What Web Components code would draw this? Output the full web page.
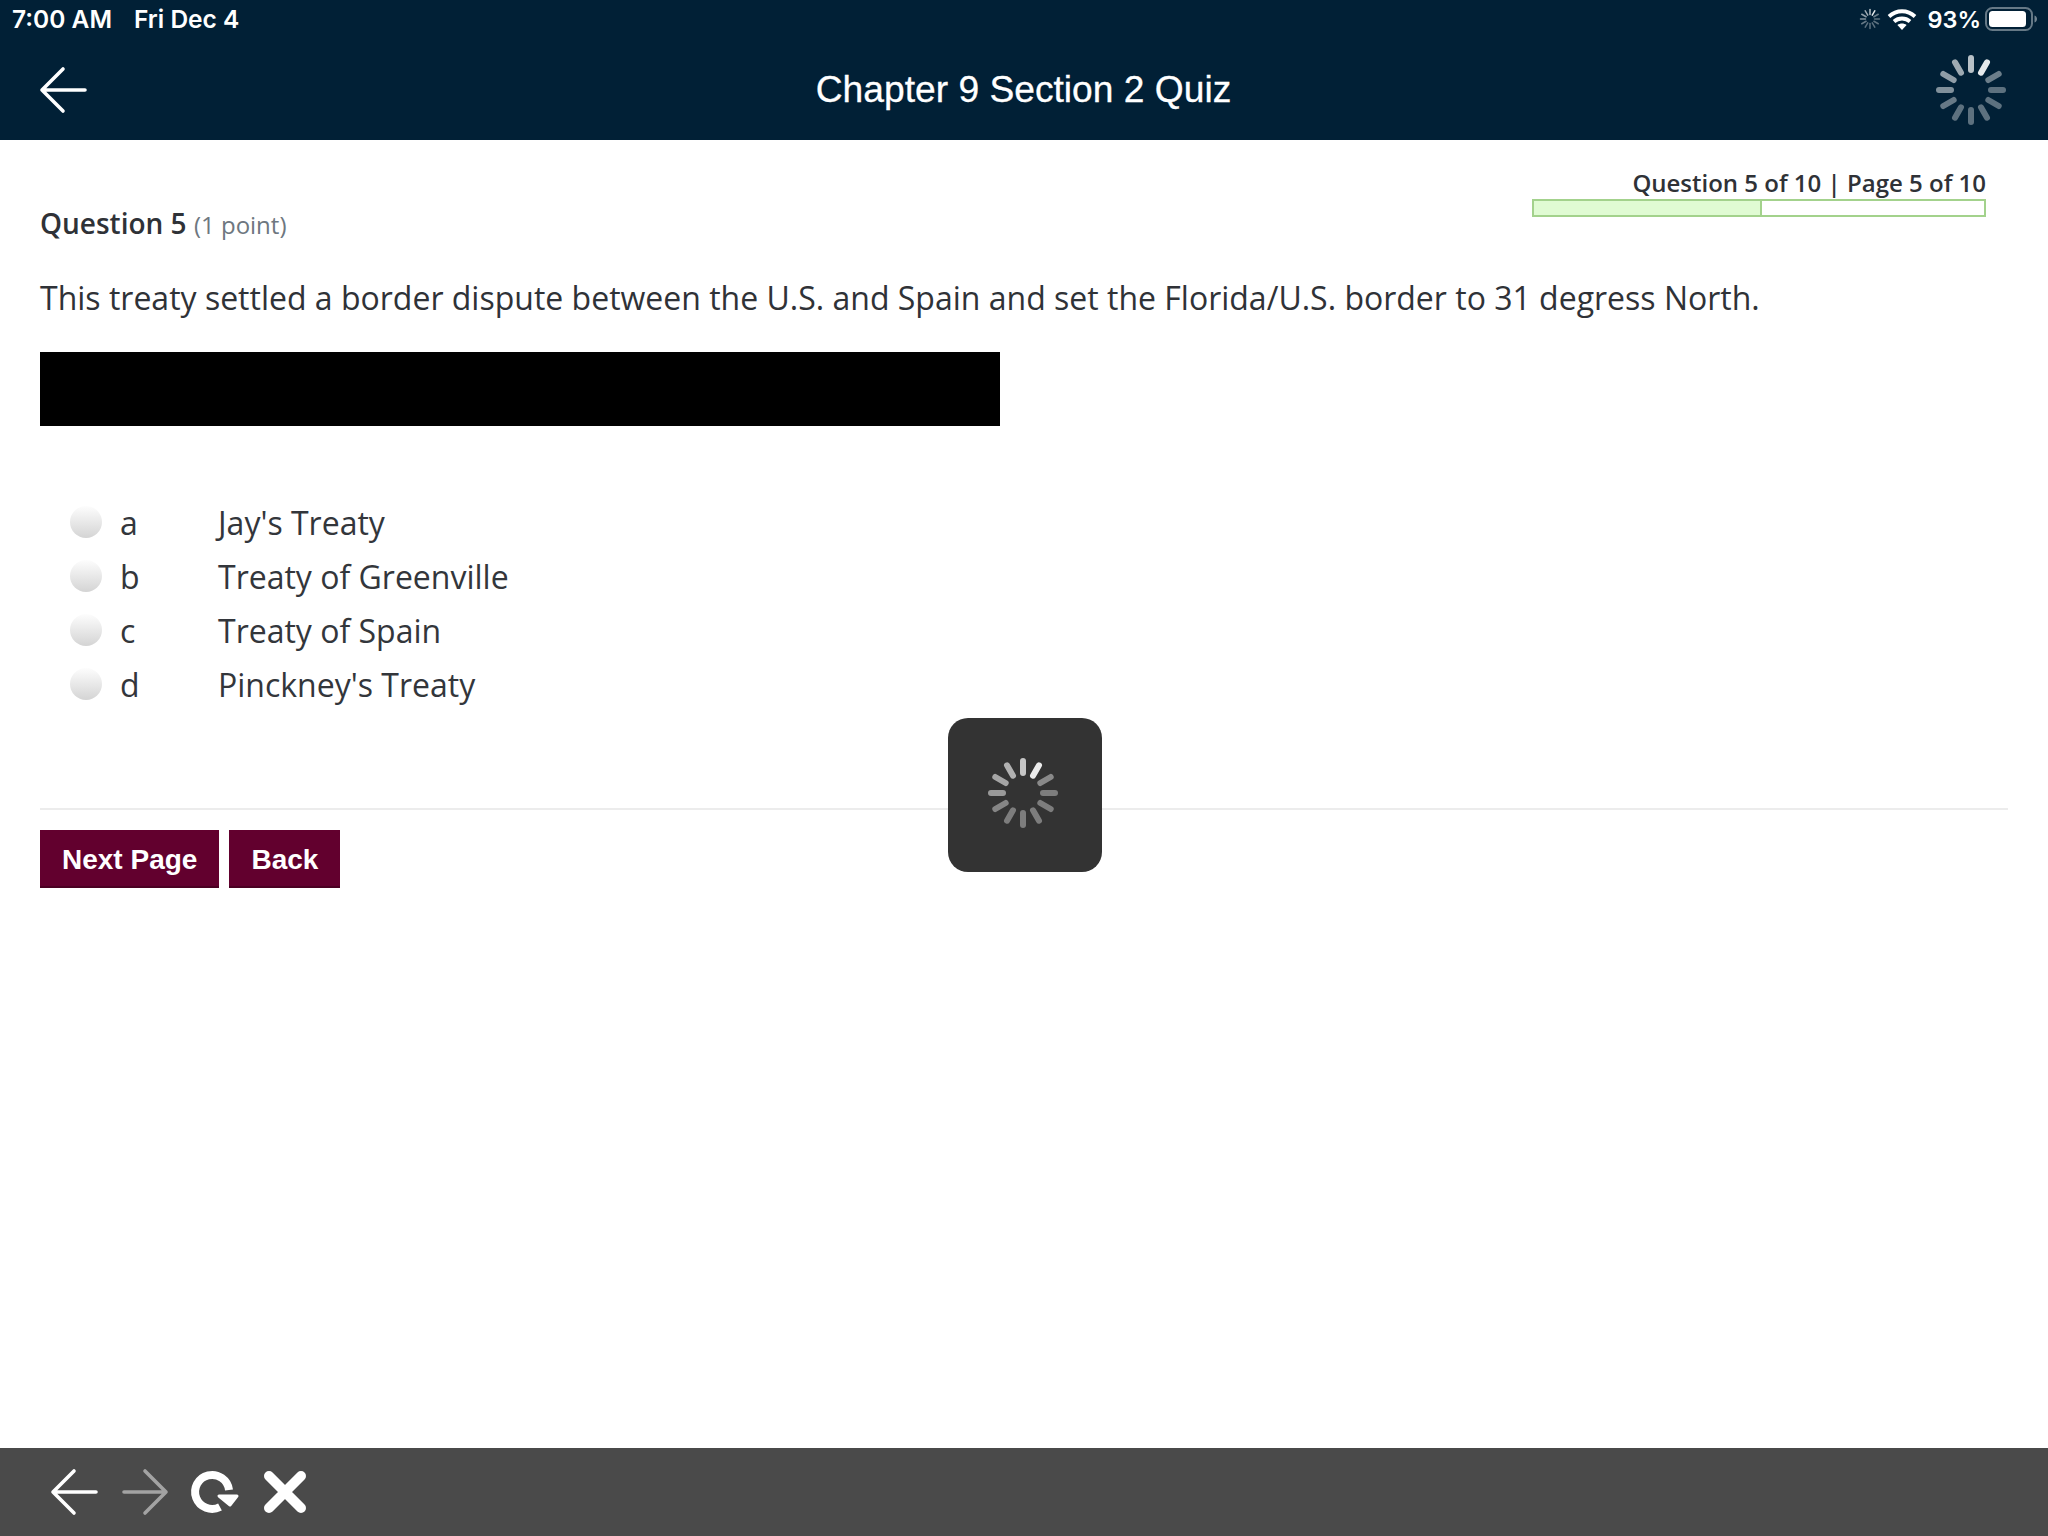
<!DOCTYPE html>
<html lang="en">
<head>
<meta charset="utf-8">
<title>Chapter 9 Section 2 Quiz</title>
<style>
  html, body { margin: 0; height: 100%; background: #fff; }
  body { font-family: "Open Sans", sans-serif; }
  quiz-app { height: 1536px; }
</style>
</head>
<body>
<quiz-app>
  <status-bar slot="top" time="7:00 AM" date="Fri Dec 4" battery="93%"></status-bar>
  <quiz-header slot="top" title="Chapter 9 Section 2 Quiz"></quiz-header>

  <quiz-question number="5" points="(1 point)" progress="Question 5 of 10 | Page 5 of 10">
    This treaty settled a border dispute between the U.S. and Spain and set the Florida/U.S. border to 31 degress North.
  </quiz-question>
  <quiz-option letter="a">Jay's Treaty</quiz-option>
  <quiz-option letter="b">Treaty of Greenville</quiz-option>
  <quiz-option letter="c">Treaty of Spain</quiz-option>
  <quiz-option letter="d">Pinckney's Treaty</quiz-option>
  <quiz-actions>
    <quiz-button>Next Page</quiz-button>
    <quiz-button>Back</quiz-button>
  </quiz-actions>

  <browser-toolbar slot="bottom"></browser-toolbar>
  <loading-hud slot="overlay"></loading-hud>
</quiz-app>

<script>
// Opacity of each spoke, clockwise from 12 o'clock
const SPOKE_OPACITY = [0.72, 0.9, 0.42, 0.36, 0.36, 0.36, 0.36, 0.36, 0.4, 0.5, 0.56, 0.62];

function spokes(inner, outer, width, color, opacity = SPOKE_OPACITY) {
  return opacity.map((o, i) =>
    `<line x1="0" y1="${-inner}" x2="0" y2="${-outer}" stroke="${color}" stroke-width="${width}" stroke-linecap="round" opacity="${o}" transform="rotate(${i * 30})"/>`
  ).join('');
}

class SpinnerIcon extends HTMLElement {
  connectedCallback() {
    const size = parseFloat(this.getAttribute('size')) || 76;
    const inner = parseFloat(this.getAttribute('inner')) || 20;
    const outer = parseFloat(this.getAttribute('outer')) || 32;
    const width = parseFloat(this.getAttribute('stroke')) || 6;
    this.attachShadow({ mode: 'open' }).innerHTML = `
      <style>:host { display: block; width: ${size}px; height: ${size}px; } svg { display: block; }</style>
      <svg width="${size}" height="${size}" viewBox="${-size / 2} ${-size / 2} ${size} ${size}">${spokes(inner, outer, width, '#fff')}</svg>`;
  }
}

class StatusBar extends HTMLElement {
  connectedCallback() {
    this.attachShadow({ mode: 'open' }).innerHTML = `
      <style>
        :host {
          display: flex; align-items: center; height: 38px; box-sizing: border-box;
          padding: 0 11px 0 12px; background: #012036; color: #fff;
          font: 600 24.5px Inter, sans-serif;
        }
        .date { margin-left: 22px; }
        .right { margin-left: auto; display: flex; align-items: center; }
        .pct { margin: 0 4px 0 10px; font-size: 23.5px; }
        svg { display: block; }
      </style>
      <span>${this.getAttribute('time')}</span>
      <span class="date">${this.getAttribute('date')}</span>
      <div class="right">
        <spinner-icon size="22" inner="4.5" outer="9.500" stroke="1.5"></spinner-icon>
        <svg style="margin-left:6px" width="30" height="24" viewBox="0 0 30 24" fill="none" stroke="#fff" stroke-width="3.8">
          <path d="M2 9.500C9.500 2.500 20.500 2.500 28 9.500"/>
          <path d="M7 14.500C11.500 10.500 18.500 10.500 23 14.500"/>
          <path d="M15 23l-4.600-5c2.600-2 6.600-2 9.200 0z" fill="#fff" stroke="none"/>
        </svg>
        <span class="pct">93%</span>
        <svg width="52" height="24" viewBox="0 0 52 24">
          <rect x="1" y="1" width="46" height="22" rx="6.500" fill="none" stroke="#fff" stroke-opacity=".4" stroke-width="2"/>
          <rect x="4" y="4" width="37" height="16" rx="3.500" fill="#fff"/>
          <path d="M49.500 8.500c1.800.6 2.500 2 2.500 3.500s-.7 2.900-2.500 3.500z" fill="#fff" fill-opacity=".45"/>
        </svg>
      </div>`;
  }
}

class QuizHeader extends HTMLElement {
  connectedCallback() {
    this.attachShadow({ mode: 'open' }).innerHTML = `
      <style>
        :host {
          display: grid; grid-template-columns: 1fr auto 1fr; align-items: center;
          box-sizing: border-box; height: 102px; padding: 2px 39px 0 38px; background: #012036; color: #fff;
        }
        h1 { margin: -2px 0 0; font: 400 37.2px "Liberation Sans", Arial, sans-serif; -webkit-text-stroke: 0.3px #fff; }
        svg { display: block; }
        spinner-icon { justify-self: end; }
      </style>
      <svg width="52" height="48" viewBox="0 0 52 48" fill="none" stroke="#fff" stroke-width="3.6" stroke-linecap="round" stroke-linejoin="round">
        <path d="M25 3 4 24l21 21M4 24h43"/>
      </svg>
      <h1>${this.getAttribute('title')}</h1>
      <spinner-icon></spinner-icon>`;
  }
}

class QuizQuestion extends HTMLElement {
  connectedCallback() {
    this.attachShadow({ mode: 'open' }).innerHTML = `
      <style>
        :host { display: block; padding: 25px 22px 0 0; color: #2f3237; }
        .top { display: flex; justify-content: space-between; align-items: flex-start; }
        h2 { margin: 37px 0 0; font: 600 28px/42px "Open Sans", sans-serif; }
        h2 small { font-weight: 400; font-size: 24px; color: #6e7780; }
        .progress { width: 454px; }
        .label { padding-top: 1px; font: 600 24px/33px "Open Sans", sans-serif; text-align: right; }
        .bar { height: 18px; box-sizing: border-box; border: 2px solid #a3d28c; background: #fff; }
        .fill { height: 100%; width: 228px; background: #e0fbd3; border-right: 2px solid #a3d28c; box-sizing: border-box; }
        p { margin: 30px 0 0; font: 400 32px/44px "Open Sans", sans-serif; white-space: nowrap; }
        .redacted { margin-top: 32px; width: 960px; height: 74px; background: #000; }
      </style>
      <div class="top">
        <h2>Question ${this.getAttribute('number')} <small>${this.getAttribute('points')}</small></h2>
        <div class="progress">
          <div class="label">${this.getAttribute('progress')}</div>
          <div class="bar"><div class="fill"></div></div>
        </div>
      </div>
      <p><slot></slot></p>
      <div class="redacted"></div>`;
  }
}

class QuizOption extends HTMLElement {
  connectedCallback() {
    this.attachShadow({ mode: 'open' }).innerHTML = `
      <style>
        :host {
          display: flex; align-items: center; height: 54px; padding-left: 30px;
          color: #33363b; font: 400 32px "Open Sans", sans-serif;
        }
        :host(:first-of-type) { margin-top: 69px; }
        .radio { width: 32px; height: 32px; border-radius: 50%; background: linear-gradient(#fdfdfd, #d4d4d4); }
        .letter { width: 98px; margin-left: 18px; }
      </style>
      <span class="radio"></span>
      <span class="letter">${this.getAttribute('letter')}</span>
      <span><slot></slot></span>`;
  }
}

class QuizActions extends HTMLElement {
  constructor() {
    super();
    this.attachShadow({ mode: 'open' }).innerHTML = `
      <style>
        :host { display: flex; gap: 10px; margin-top: 97px; padding-top: 20px; border-top: 2px solid #ececec; }
      </style>
      <slot></slot>`;
  }
}

class QuizButton extends HTMLElement {
  constructor() {
    super();
    this.attachShadow({ mode: 'open' }).innerHTML = `
      <style>
        :host {
          display: block; height: 58px; padding: 0 22px;
          background: #62002e; color: #fff; box-shadow: inset 0 -2px 0 #4a0022;
          font: 700 28px/60px "Liberation Sans", Arial, sans-serif;
        }
      </style>
      <slot></slot>`;
  }
}

class BrowserToolbar extends HTMLElement {
  connectedCallback() {
    this.attachShadow({ mode: 'open' }).innerHTML = `
      <style>
        :host { display: flex; align-items: center; height: 88px; padding-left: 49px; background: #4a4a4a; }
        svg { display: block; }
      </style>
      <svg width="52" height="48" viewBox="0 0 52 48" fill="none" stroke="#fff" stroke-width="3.6" stroke-linecap="round" stroke-linejoin="round">
        <path d="M25 3 4 24l21 21M4 24h43"/>
      </svg>
      <svg style="margin-left:18px" width="52" height="48" viewBox="0 0 52 48" fill="none" stroke="#a3a3a3" stroke-width="3.6" stroke-linecap="round" stroke-linejoin="round">
        <path d="M26 3l21 21-21 21M47 24H5"/>
      </svg>
      <svg style="margin-left:15px" width="56" height="48" viewBox="0 0 56 48" fill="none">
        <path d="M43 22A17 17 0 1 0 34 39" stroke="#fff" stroke-width="8"/>
        <path d="M33 28H51L44 37Z" fill="#fff" stroke="#fff" stroke-width="3" stroke-linejoin="round"/>
      </svg>
      <svg style="margin-left:21px" width="44" height="44" viewBox="0 0 44 44" stroke="#fff" stroke-width="10" stroke-linecap="round">
        <path d="M6 6l32 32M38 6 6 38"/>
      </svg>`;
  }
}

class LoadingHud extends HTMLElement {
  connectedCallback() {
    this.attachShadow({ mode: 'open' }).innerHTML = `
      <style>
        :host {
          position: absolute; left: 948px; top: 718px; width: 154px; height: 154px;
          display: flex; align-items: center; justify-content: center;
          border-radius: 20px; background: #333;
        }
      </style>
      <spinner-icon style="margin:0 5px 5px 0"></spinner-icon>`;
  }
}

class QuizApp extends HTMLElement {
  constructor() {
    super();
    this.attachShadow({ mode: 'open' }).innerHTML = `
      <style>
        :host { display: flex; flex-direction: column; position: relative; overflow: hidden; }
        main { flex: 1; padding: 0 40px; }
      </style>
      <slot name="top"></slot>
      <main><slot></slot></main>
      <slot name="bottom"></slot>
      <slot name="overlay"></slot>`;
  }
}

customElements.define('spinner-icon', SpinnerIcon);
customElements.define('status-bar', StatusBar);
customElements.define('quiz-header', QuizHeader);
customElements.define('quiz-question', QuizQuestion);
customElements.define('quiz-option', QuizOption);
customElements.define('quiz-actions', QuizActions);
customElements.define('quiz-button', QuizButton);
customElements.define('browser-toolbar', BrowserToolbar);
customElements.define('loading-hud', LoadingHud);
customElements.define('quiz-app', QuizApp);
</script>
</body>
</html>
